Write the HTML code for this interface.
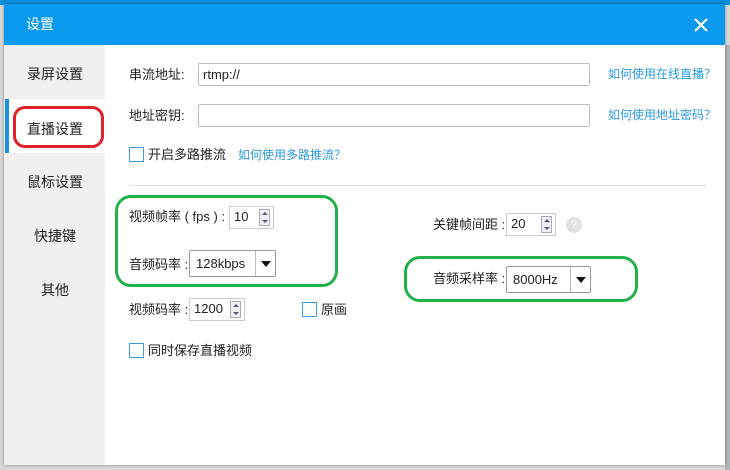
<!DOCTYPE html>
<html><head><meta charset="utf-8"><style>
*{margin:0;padding:0;box-sizing:border-box}
body{width:730px;height:470px;overflow:hidden;background:#d8d8d8;position:relative;font-family:"Liberation Sans","Microsoft YaHei","Noto Sans CJK SC",sans-serif;font-size:13px;color:#222}
.a{position:absolute}
.lbl{position:absolute;font-size:13px;line-height:16px;white-space:nowrap}
.link{color:#2a9be0;font-size:12px}
.inp{position:absolute;border:1px solid #bdbdbd;background:#fff;border-radius:2px}
.cb{position:absolute;width:15px;height:15px;border:1px solid #3a9ee0;background:#fff}
.spin{position:absolute;border:1px solid #ccc;background:#fff;font-size:13px;line-height:20px;padding-left:4px}
.arr{position:absolute;right:3px;top:2px;width:11px;height:17px;border:1px solid #aab;background:#eef0f6}
.arr:before{content:"";position:absolute;left:2px;top:2px;border:3px solid transparent;border-bottom:3px solid #557;border-top:0}
.arr:after{content:"";position:absolute;left:2px;bottom:2px;border:3px solid transparent;border-top:3px solid #557;border-bottom:0}
.sel{position:absolute;border:1px solid #999;background:#fff;border-radius:2px;font-size:13px;padding-left:6px}
.sel i{position:absolute;right:0;top:0;bottom:0;width:20px;border-left:1px solid #bbb}
.sel i:after{content:"";position:absolute;left:5px;top:50%;margin-top:-3px;border:5px solid transparent;border-top:6px solid #111;border-bottom:0}
.side{position:absolute;left:5px;width:100px;text-align:center;font-size:14px}
</style></head><body>
<div class="a" style="left:0;top:0;width:730px;height:5px;background:#0a8fdc"></div>
<div class="a" style="left:725px;top:45px;width:5px;height:425px;background:#b0b4b8"></div>
<div class="a" style="left:4px;top:4px;width:721px;height:461px;background:#fff;box-shadow:0 0 3px rgba(0,0,0,.4)"></div>
<div class="a" style="left:4px;top:4px;width:721px;height:41px;background:#0999ef"></div>
<div class="lbl" style="left:26px;top:16px;color:#fff;font-size:14px">设置</div>
<svg class="a" style="left:693px;top:17px" width="16" height="16"><path d="M2 2L14 14M14 2L2 14" stroke="#fff" stroke-width="2"/></svg>
<div class="a" style="left:4px;top:45px;width:101px;height:420px;background:#f0f0f0"></div>
<div class="a" style="left:5px;top:99px;width:100px;height:54px;background:#fff"></div>
<div class="a" style="left:5px;top:99px;width:4px;height:54px;background:#1e90e0"></div>
<div class="side" style="top:64px">录屏设置</div>
<div class="side" style="top:119px">直播设置</div>
<div class="side" style="top:172px">鼠标设置</div>
<div class="side" style="top:226px">快捷键</div>
<div class="side" style="top:280px">其他</div>
<div class="a" style="left:13px;top:106px;width:91px;height:42px;border:3px solid #e0202a;border-radius:12px"></div>

<div class="lbl" style="left:129px;top:67px">串流地址:</div>
<div class="inp" style="left:198px;top:63px;width:392px;height:23px"></div>
<div class="lbl" style="left:203px;top:67px">rtmp://</div>
<div class="lbl link" style="left:608px;top:66px">如何使用在线直播？</div>
<div class="lbl" style="left:129px;top:108px">地址密钥:</div>
<div class="inp" style="left:198px;top:104px;width:392px;height:23px"></div>
<div class="lbl link" style="left:608px;top:107px">如何使用地址密码？</div>
<div class="cb" style="left:129px;top:147px"></div>
<div class="lbl" style="left:148px;top:147px">开启多路推流</div>
<div class="lbl link" style="left:238px;top:147px">如何使用多路推流？</div>
<div class="a" style="left:129px;top:185px;width:578px;height:1px;background:#e0e0e0"></div>

<div class="lbl" style="left:129px;top:209px">视频帧率 ( fps ) :</div>
<div class="spin" style="left:229px;top:206px;width:45px;height:23px">10<span class="arr"></span></div>
<div class="lbl" style="left:129px;top:257px">音频码率 :</div>
<div class="sel" style="left:189px;top:250px;width:87px;height:27px;line-height:25px">128kbps<i></i></div>
<div class="lbl" style="left:129px;top:302px">视频码率 :</div>
<div class="spin" style="left:189px;top:298px;width:56px;height:23px">1200<span class="arr"></span></div>
<div class="cb" style="left:302px;top:302px"></div>
<div class="lbl" style="left:321px;top:302px">原画</div>
<div class="cb" style="left:129px;top:343px"></div>
<div class="lbl" style="left:148px;top:343px">同时保存直播视频</div>
<div class="a" style="left:115px;top:195px;width:223px;height:92px;border:3px solid #22b04a;border-radius:16px"></div>

<div class="lbl" style="left:433px;top:217px">关键帧间距 :</div>
<div class="spin" style="left:506px;top:213px;width:50px;height:23px">20<span class="arr"></span></div>
<div class="a" style="left:566px;top:217px;width:16px;height:16px;border-radius:50%;background:#e2e2e2;color:#fff;font-size:11px;text-align:center;line-height:16px">?</div>
<div class="lbl" style="left:433px;top:271px">音频采样率 :</div>
<div class="sel" style="left:506px;top:266px;width:85px;height:27px;line-height:25px">8000Hz<i></i></div>
<div class="a" style="left:404px;top:256px;width:234px;height:46px;border:3px solid #22b04a;border-radius:16px"></div>
</body></html>
